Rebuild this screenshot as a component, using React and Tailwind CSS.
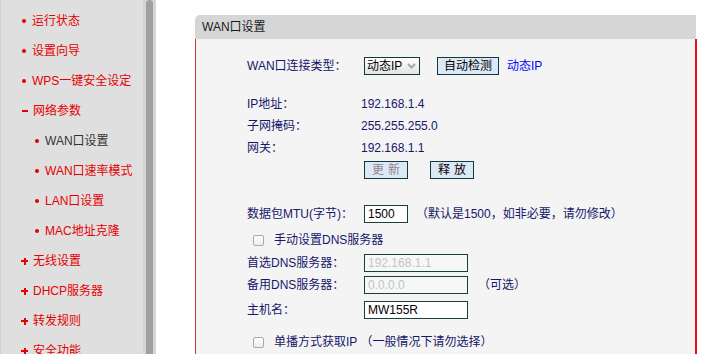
import React from 'react';

const menu = [
    { label: '运行状态', type: 'dot' },
    { label: '设置向导', type: 'dot' },
    { label: 'WPS一键安全设定', type: 'dot' },
    { label: '网络参数', type: 'minus' },
    { label: 'WAN口设置', type: 'sub', active: true },
    { label: 'WAN口速率模式', type: 'sub' },
    { label: 'LAN口设置', type: 'sub' },
    { label: 'MAC地址克隆', type: 'sub' },
    { label: '无线设置', type: 'plus' },
    { label: 'DHCP服务器', type: 'plus' },
    { label: '转发规则', type: 'plus' },
    { label: '安全功能', type: 'plus' },
];

const MenuMark = ({ type }) => {
    if (type === 'minus') return <span className="block w-[6px] h-[2px] bg-[#e60000]" />;
    if (type === 'plus')
        return (
            <span className="relative block w-[7px] h-[7px]">
                <span className="absolute left-0 top-[2.5px] w-[7px] h-[2px] bg-[#e60000]" />
                <span className="absolute top-0 left-[2.5px] w-[2px] h-[7px] bg-[#e60000]" />
            </span>
        );
    return <span className="block w-[4px] h-[4px] rounded-full bg-[#e60000]" />;
};

const indent = {
    dot: 'pl-[21px]',
    minus: 'pl-[20px]',
    plus: 'pl-[20px]',
    sub: 'pl-[34px]',
};

const Sidebar = () => (
    <div className="w-[143px] shrink-0 bg-[#dfdfdf] border-l border-[#d0d0d0] pt-[6px]">
        {menu.map(item => (
            <div key={item.label} className={`h-[30px] flex items-center ${indent[item.type]}`}>
                <span
                    className={`flex items-center justify-center ${item.type === 'dot' || item.type === 'sub' ? 'w-[4px] mr-[6px]' : 'w-[7px] mr-[5px]'}`}
                >
                    <MenuMark type={item.type} />
                </span>
                <span className={`text-[12px] ${item.active ? 'text-[#333333]' : 'text-[#e60000]'}`}>{item.label}</span>
            </div>
        ))}
    </div>
);

const Scrollbar = () => (
    <div className="w-[13px] shrink-0 flex bg-[#d4d4d4] px-[3px]">
        <div className="w-[7px] bg-[#a0a0a0] rounded-t-[4px]" />
    </div>
);

const Label = ({ children }) => <div className="w-[114px] shrink-0">{children}</div>;

const Row = ({ className = '', children }) => (
    <div className={`h-[22px] flex items-center pl-[51px] ${className}`}>{children}</div>
);

const Btn = ({ children, disabled, className = '' }) => (
    <div
        className={`h-[18px] flex items-center justify-center border border-[#0e3a3a] bg-[#dce8f6] text-[12px] ${disabled ? 'text-[#8a8a8a]' : 'text-black'} ${className}`}
    >
        {children}
    </div>
);

const Field = ({ value, width, disabled }) => (
    <div
        className={`h-[18px] ${width} ml-[3px] border border-[#17403c] flex items-center pl-[3px] text-[12px] ${disabled ? 'bg-[#f7f7f7] text-[#c4c4c4]' : 'bg-white text-black'}`}
    >
        {value}
    </div>
);

const Check = () => (
    <span className="block w-[11px] h-[11px] rounded-[2px] border border-[#a9a9a9] bg-gradient-to-b from-white to-[#ececec]" />
);

const WanPanel = () => (
    <div className="w-[502px] shrink-0">
        <div className="h-[24px] bg-[#d6d6d6] rounded-tl-[5px] mr-[1px] flex items-center pl-[7px] text-[12px] text-[#1a1a1a]">
            WAN口设置
        </div>
        <div className="bg-[#f4f4f4] border-l border-l-[#cc3333] border-r-2 border-r-[#ee1111] h-[330px] pt-[16px] text-[12px] text-[#16166a]">
            <Row>
                <Label>WAN口连接类型：</Label>
                <div className="ml-[3px] w-[56px] h-[18px] border border-[#0e3a3a] bg-gradient-to-b from-white to-[#e4e4e4] flex items-center justify-between pl-[2px] pr-[3px] text-black">
                    <span>动态IP</span>
                    <svg width="9" height="6" viewBox="0 0 9 6">
                        <path d="M1 1 L4.5 4.5 L8 1" fill="none" stroke="#a8a8a8" strokeWidth="2" />
                    </svg>
                </div>
                <Btn className="w-[62px] ml-[17px]">自动检测</Btn>
                <span className="ml-[8px] text-[#0000ff]">动态IP</span>
            </Row>
            <Row className="mt-[16px]">
                <Label>IP地址：</Label>
                <span>192.168.1.4</span>
            </Row>
            <Row>
                <Label>子网掩码：</Label>
                <span>255.255.255.0</span>
            </Row>
            <Row>
                <Label>网关：</Label>
                <span>192.168.1.1</span>
            </Row>
            <Row>
                <Label />
                <Btn disabled className="w-[44px] ml-[3px] tracking-[4px] pl-[4px]">更新</Btn>
                <Btn className="w-[44px] ml-[22px] tracking-[4px] pl-[4px]">释放</Btn>
            </Row>
            <Row className="mt-[22px]">
                <Label>数据包MTU(字节)：</Label>
                <Field value="1500" width="w-[44px]" />
                <span className="ml-[8px]">（默认是1500，如非必要，请勿修改）</span>
            </Row>
            <Row className="mt-[4px] pl-[57px]">
                <Check />
                <span className="ml-[10px]">手动设置DNS服务器</span>
            </Row>
            <Row className="mt-[1px]">
                <Label>首选DNS服务器：</Label>
                <Field value="192.168.1.1" width="w-[104px]" disabled />
            </Row>
            <Row>
                <Label>备用DNS服务器：</Label>
                <Field value="0.0.0.0" width="w-[104px]" disabled />
                <span className="ml-[10px]">（可选）</span>
            </Row>
            <Row className="mt-[3px]">
                <Label>主机名：</Label>
                <Field value="MW155R" width="w-[104px]" />
            </Row>
            <Row className="mt-[10px] pl-[57px]">
                <Check />
                <span className="ml-[10px]">单播方式获取IP （一般情况下请勿选择）</span>
            </Row>
        </div>
    </div>
);

export default function App() {
    return (
        <div className="w-[702px] h-[354px] overflow-hidden flex bg-white font-['Liberation_Sans','Noto_Sans_CJK_SC',sans-serif] text-[12px]">
            <Sidebar />
            <Scrollbar />
            <div className="flex-1 pl-[39px] pt-[15px]">
                <WanPanel />
            </div>
        </div>
    );
}
